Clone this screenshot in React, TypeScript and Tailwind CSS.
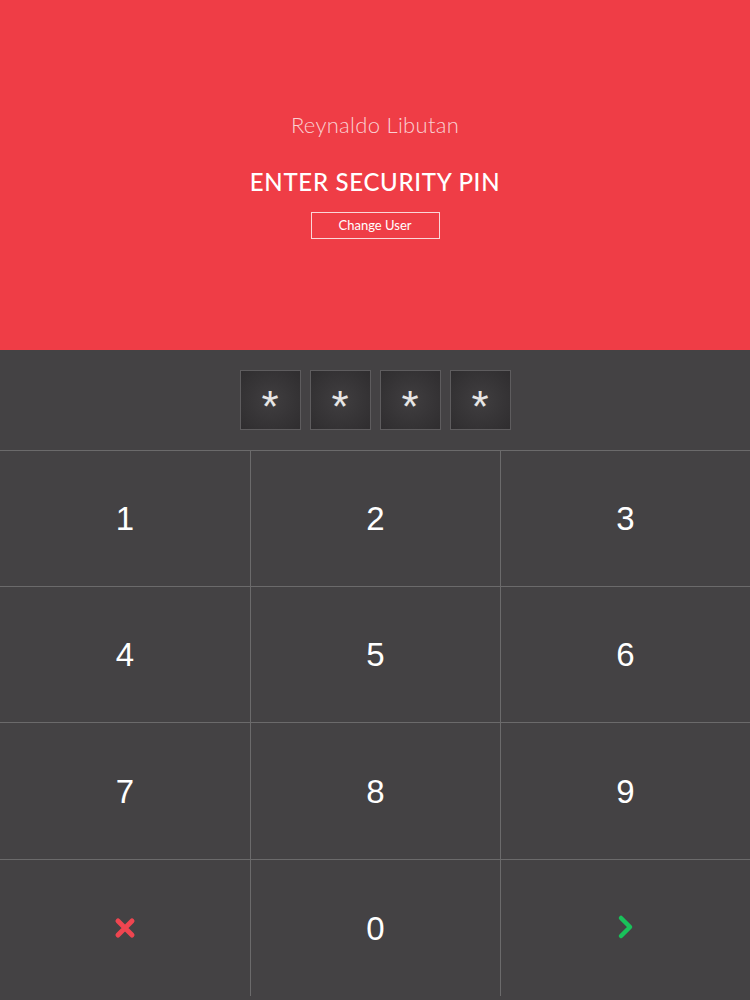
const keys = ["1", "2", "3", "4", "5", "6", "7", "8", "9", "cancel", "0", "ok"];

function PinBox() {
    return (
        <div className="w-[61px] h-[60px] border border-[#5e5c5e] bg-[radial-gradient(circle,#403e40_0%,#2f2d2f_100%)] flex items-center justify-center">
            <span className="text-[44px] leading-none text-[#e6e6e6] font-['Liberation_Sans',sans-serif] mt-[14px]">*</span>
        </div>
    );
}

function KeyContent({k}: {k: string}) {
    if (k === "cancel") {
        return (
            <svg width="24" height="24" viewBox="0 0 24 24">
                <path d="M5 5L19 19M19 5L5 19" stroke="#ef4550" strokeWidth="5" strokeLinecap="round"/>
            </svg>
        );
    }
    if (k === "ok") {
        return (
            <svg width="20" height="28" viewBox="0 0 20 28">
                <path d="M5 4L14 13L5 22" fill="none" stroke="#19c15a" strokeWidth="4.5" strokeLinecap="round" strokeLinejoin="round"/>
            </svg>
        );
    }
    return <span className="text-[33px] leading-none text-white font-['Liberation_Sans',sans-serif]">{k}</span>;
}

export default function App() {
    return (
        <div className="w-[750px] h-[1000px] overflow-hidden bg-[#444244] flex flex-col">
            {/* Header */}
            <div className="h-[350px] shrink-0 bg-[#ef3d46] flex flex-col items-center pt-[111px]">
                <p className="text-[22px] leading-[28px] font-light text-[#fad0d2] font-['Lato',sans-serif] tracking-[0.3px]">
                    Reynaldo Libutan
                </p>
                <h1 className="mt-[28px] text-[24px] leading-[30px] font-medium text-white font-['Lato',sans-serif] tracking-[0.7px]">
                    ENTER SECURITY PIN
                </h1>
                <button className="mt-[15px] w-[129px] h-[27px] border border-[#fbd6d8] text-[13px] font-normal text-white font-['Lato',sans-serif] flex items-center justify-center">
                    Change User
                </button>
            </div>

            {/* Pin */}
            <div className="h-[100px] shrink-0 flex justify-center items-start pt-[20px] gap-[9px]">
                <PinBox/>
                <PinBox/>
                <PinBox/>
                <PinBox/>
            </div>

            {/* Keypad */}
            <div className="grid grid-cols-3 border-t border-[#6b6a6b]">
                {keys.map((k, i) => (
                    <div
                        key={k}
                        className={`flex items-center justify-center ${i < 9 ? "border-b border-[#6b6a6b]" : ""} ${i % 3 !== 0 ? "border-l border-[#6b6a6b]" : ""} ${i >= 6 && i < 9 ? "h-[137px]" : "h-[136px]"}`}
                    >
                        <KeyContent k={k}/>
                    </div>
                ))}
            </div>
        </div>
    );
}
